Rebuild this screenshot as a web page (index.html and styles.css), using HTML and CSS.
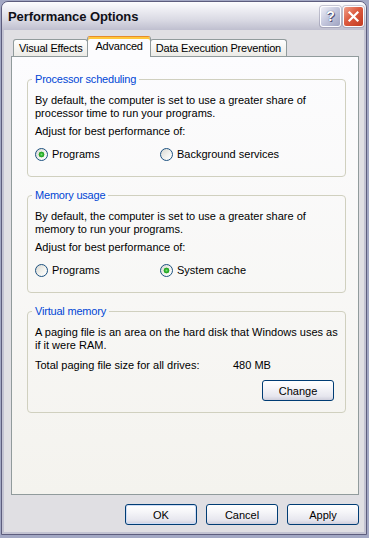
FILE: index.html
```html
<!DOCTYPE html>
<html lang="en">
<head>
<meta charset="utf-8">
<title>Performance Options</title>
<link rel="stylesheet" href="styles.css">
</head>
<body>
<div class="window">
  <div class="titlebar">
    <span class="title">Performance Options</span>
    <div class="caption-buttons">
      <button class="cap-btn help" type="button">?</button>
      <button class="cap-btn close" type="button"><svg viewBox="0 0 19 19" width="19" height="19"><path d="M5.5 5.5 L13.5 13.5 M13.5 5.5 L5.5 13.5" stroke="#fff" stroke-width="2.2" stroke-linecap="square"/></svg></button>
    </div>
  </div>
  <div class="client">
    <div class="tabs">
      <div class="tab">Visual Effects</div>
      <div class="tab selected">Advanced</div>
      <div class="tab">Data Execution Prevention</div>
    </div>
    <div class="panel">
      <fieldset class="group">
        <legend>Processor scheduling</legend>
        <p class="desc">By default, the computer is set to use a greater share of<br>processor time to run your programs.</p>
        <p class="adjust">Adjust for best performance of:</p>
        <div class="radios">
          <label class="radio"><input type="radio" name="cpu" checked><span>Programs</span></label>
          <label class="radio"><input type="radio" name="cpu"><span>Background services</span></label>
        </div>
      </fieldset>
      <fieldset class="group">
        <legend>Memory usage</legend>
        <p class="desc">By default, the computer is set to use a greater share of<br>memory to run your programs.</p>
        <p class="adjust">Adjust for best performance of:</p>
        <div class="radios">
          <label class="radio"><input type="radio" name="mem"><span>Programs</span></label>
          <label class="radio"><input type="radio" name="mem" checked><span>System cache</span></label>
        </div>
      </fieldset>
      <fieldset class="group vm">
        <legend>Virtual memory</legend>
        <p class="desc">A paging file is an area on the hard disk that Windows uses as<br>if it were RAM.</p>
        <div class="total">
          <span>Total paging file size for all drives:</span>
          <span>480 MB</span>
        </div>
        <div class="change-row">
          <button class="btn" type="button">Change</button>
        </div>
      </fieldset>
    </div>
    <div class="footer">
      <button class="btn default" type="button">OK</button>
      <button class="btn" type="button">Cancel</button>
      <button class="btn" type="button">Apply</button>
    </div>
  </div>
</div>
</body>
</html>
```

FILE: styles.css
```css
* { box-sizing: border-box; }
html, body { margin: 0; padding: 0; }
body {
  width: 369px;
  height: 538px;
  overflow: hidden;
  background: #a3a8c4;
  font-family: "Liberation Sans", Arial, sans-serif;
  font-size: 11px;
  color: #000;
}
.window {
  margin: 1px 0 0 1px;
  width: 366px;
  height: 534px;
  border: 1px solid #5d5d7d;
  border-radius: 7px 7px 0 0;
  overflow: hidden;
  background: #c3c3d2;
  display: flex;
  flex-direction: column;
}
.titlebar {
  flex: none;
  height: 28px;
  display: flex;
  align-items: center;
  justify-content: space-between;
  padding: 0 2px 0 6px;
  background: linear-gradient(#fdfdfe 0%, #ececf2 30%, #d9d9e3 65%, #bfbfcf 100%);
}
.title {
  font-weight: bold;
  font-size: 13px;
  color: #101018;
  letter-spacing: -0.1px;
}
.caption-buttons { display: flex; gap: 2px; }
.cap-btn {
  width: 21px;
  height: 21px;
  padding: 0;
  border: 1px solid #fdfdff;
  border-radius: 3px;
  display: flex;
  align-items: center;
  justify-content: center;
  box-shadow: 0 0 0 1px rgba(110,110,140,0.35);
}
.help {
  background: linear-gradient(135deg, #eeeff7 0%, #c3c6dc 50%, #9ea3c1 100%);
  color: #fff;
  font: bold 14px "Liberation Sans", Arial, sans-serif;
  text-shadow: 0 0 1px #3c3c5c, 1px 1px 0 #55557a;
}
.close {
  background: linear-gradient(135deg, #f0a08a 0%, #dc5a3f 45%, #c23a21 100%);
}
.client {
  flex: 1;
  margin: 0 2px 2px;
  background: #e0dfe3;
  padding: 6px 5px 0 7px;
  display: flex;
  flex-direction: column;
}
.tabs {
  flex: none;
  height: 21px;
  margin-bottom: -1px;
  padding-left: 2px;
  display: flex;
  align-items: flex-end;
  position: relative;
  z-index: 1;
  letter-spacing: -0.2px;
}
.tab {
  height: 17px;
  margin-bottom: 1px;
  padding: 0 5px;
  border: 1px solid #919b9c;
  border-bottom: none;
  border-radius: 3px 3px 0 0;
  background: linear-gradient(#ffffff, #ecebe6);
  display: flex;
  align-items: center;
  white-space: nowrap;
}
.tab.selected {
  height: 21px;
  margin: 0 -1px 0 -1px;
  padding: 0 7px 3px 7px;
  border-top: 1px solid #e68b2c;
  box-shadow: inset 0 2px 0 #ffc83c;
  background: #fcfcfe;
  position: relative;
  z-index: 2;
}
.panel {
  flex: 1;
  border: 1px solid #919b9c;
  background: linear-gradient(#fcfcfe, #f4f3ee);
  padding: 16px 12px 0 15px;
  display: flex;
  flex-direction: column;
  gap: 12px;
}
.group {
  margin: 0;
  padding: 8px 7px 15px 7px;
  border: 1px solid #d0d0bf;
  border-radius: 4px;
  min-width: 0;
}
.group legend {
  margin-left: -3px;
  padding: 0 3px;
  line-height: 13px;
  color: #0046d5;
  letter-spacing: -0.2px;
}
.group p { margin: 0; line-height: 13px; white-space: nowrap; }
.adjust { margin-top: 5px !important; }
.radios {
  margin-top: 10px;
  display: grid;
  grid-template-columns: 125px auto;
}
.radio {
  display: flex;
  align-items: center;
  height: 13px;
  line-height: 13px;
}
.radio input {
  appearance: none;
  -webkit-appearance: none;
  width: 13px;
  height: 13px;
  margin: 0 4px 0 0;
  border: 1px solid #1c5180;
  border-radius: 50%;
  background: linear-gradient(135deg, #d8d8d2 0%, #f4f4f0 60%, #ffffff 100%);
}
.radio input:checked {
  background:
    radial-gradient(circle at 50% 50%, #7be37a 0, #2fb02e 1.6px, #21a121 2.6px, rgba(33,161,33,0) 3.2px),
    linear-gradient(135deg, #d8d8d2 0%, #f4f4f0 60%, #ffffff 100%);
}
.total {
  margin-top: 7px;
  display: grid;
  grid-template-columns: 198px auto;
  line-height: 13px;
}
.change-row {
  margin-top: 8px;
  display: flex;
  justify-content: flex-end;
  padding-right: 4px;
}
.group.vm { padding-bottom: 11px; }
.btn {
  width: 72px;
  height: 21px;
  padding: 0;
  border: 1px solid #003c74;
  border-radius: 3px;
  background: linear-gradient(#ffffff 0%, #f6f6f9 35%, #e6e6ee 80%, #cfcfdc 100%);
  font: 11px "Liberation Sans", Arial, sans-serif;
  color: #000;
}
.btn.default {
  box-shadow: inset 0 0 0 1px #cddcf5;
}
.footer {
  flex: none;
  height: 37px;
  padding-top: 9px;
  display: flex;
  justify-content: flex-end;
  gap: 9px;
}
.footer .btn { width: 72px; }
```
